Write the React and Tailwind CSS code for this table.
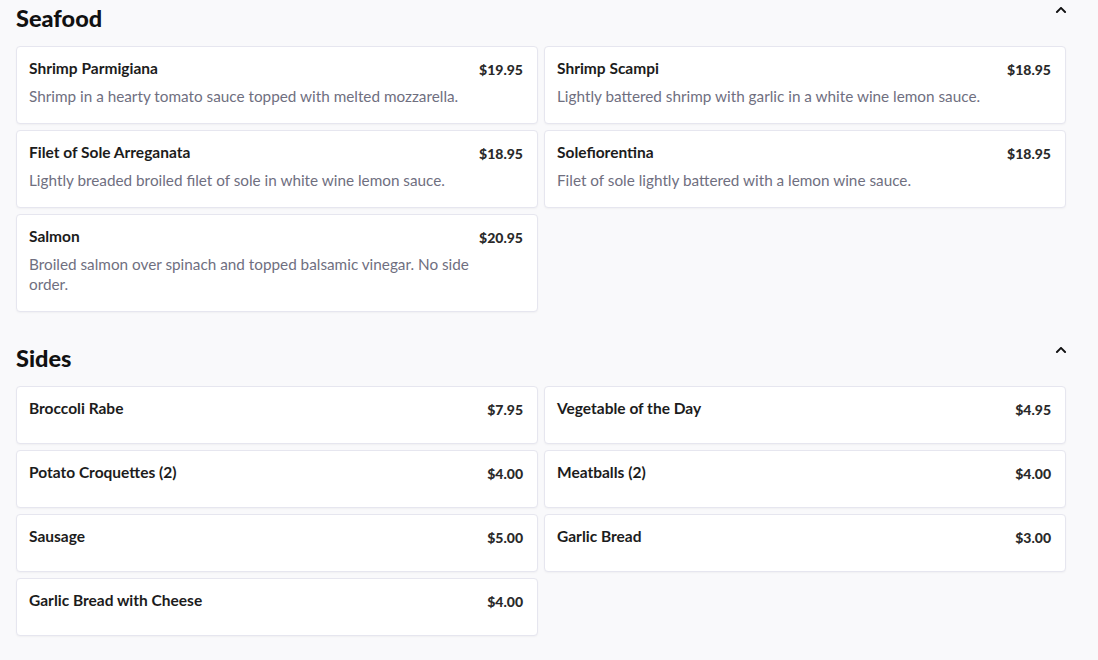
import { FaChevronUp } from "react-icons/fa";

const sections = [
  {
    title: "Seafood",
    items: [
      { name: "Shrimp Parmigiana", price: "$19.95", desc: "Shrimp in a hearty tomato sauce topped with melted mozzarella." },
      { name: "Shrimp Scampi", price: "$18.95", desc: "Lightly battered shrimp with garlic in a white wine lemon sauce." },
      { name: "Filet of Sole Arreganata", price: "$18.95", desc: "Lightly breaded broiled filet of sole in white wine lemon sauce." },
      { name: "Solefiorentina", price: "$18.95", desc: "Filet of sole lightly battered with a lemon wine sauce." },
      { name: "Salmon", price: "$20.95", desc: "Broiled salmon over spinach and topped balsamic vinegar. No side order." },
    ],
  },
  {
    title: "Sides",
    items: [
      { name: "Broccoli Rabe", price: "$7.95" },
      { name: "Vegetable of the Day", price: "$4.95" },
      { name: "Potato Croquettes (2)", price: "$4.00" },
      { name: "Meatballs (2)", price: "$4.00" },
      { name: "Sausage", price: "$5.00" },
      { name: "Garlic Bread", price: "$3.00" },
      { name: "Garlic Bread with Cheese", price: "$4.00" },
    ],
  },
];

function MenuCard({ name, price, desc }) {
  return (
    <div className="min-h-[58px] bg-white border border-[#e6e6ef] rounded-[4px] shadow-[0_1px_2px_rgba(0,0,0,0.04)] pl-3 pr-[14px] pt-[11px] pb-[17px] flex flex-col">
      <div className="h-5 flex flex-row justify-between items-start gap-4">
        <div className="text-[15.5px] leading-5 font-bold text-[#1c1c1c]">{name}</div>
        <div className="text-[14px] leading-5 font-black text-[#2a2a2a] mt-[2px] shrink-0">{price}</div>
      </div>
      {desc && (
        <div className="mt-2 pr-5 text-[15.3px] leading-5 text-[#6f6f7f]">{desc}</div>
      )}
    </div>
  );
}

export default function App() {
  return (
    <div className="min-h-[660px] w-full bg-[#f9f9fb] font-['Lato','Noto_Sans',sans-serif]">
      <div className="w-[1050px] ml-4">
        {sections.map((section, i) => (
          <div key={section.title} className={i > 0 ? "mt-[28px]" : ""}>
            <div className="h-9 flex flex-row justify-between items-start mb-[10px]">
              <h2 className="text-[23.5px] leading-9 font-black text-[#111]">{section.title}</h2>
              <FaChevronUp className="mt-[4px] mr-[-1px] w-3 h-3 text-[#111]" />
            </div>
            <div className="grid grid-cols-2 gap-[6px]">
              {section.items.map((item) => (
                <MenuCard key={item.name} {...item} />
              ))}
            </div>
          </div>
        ))}
      </div>
    </div>
  );
}
